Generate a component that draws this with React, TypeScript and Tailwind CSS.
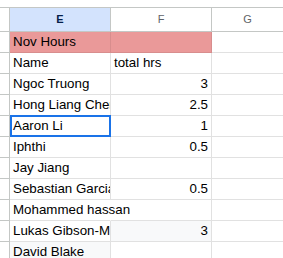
import React from "react";

type Row = {
  name: string;
  hrs?: string;
  overflow?: boolean;
  nameBg?: string;
  hrsBg?: string;
  selected?: boolean;
};

const rows: Row[] = [
  { name: "Name", hrs: "total hrs" },
  { name: "Ngoc Truong", hrs: "3" },
  { name: "Hong Liang Chen", hrs: "2.5" },
  { name: "Aaron Li", hrs: "1", selected: true },
  { name: "Iphthi", hrs: "0.5" },
  { name: "Jay Jiang" },
  { name: "Sebastian Garcia", hrs: "0.5" },
  { name: "Mohammed hassan", overflow: true },
  { name: "Lukas Gibson-Morris", hrs: "3", hrsBg: "bg-[#f8f9fa]" },
  { name: "David Blake", nameBg: "bg-[#f8f9fa]" },
];

export default function App() {
  return (
    <div
      className="w-[283px] h-[258px] overflow-hidden bg-white text-[13.33px] text-black"
      style={{ fontFamily: '"Liberation Sans", Arial, sans-serif' }}
    >
      <div className="h-[7px]" />

      {/* column headers */}
      <div className="flex h-[25px] border-y border-[#c4c7c5] text-[11px]">
        <div className="w-[10px] shrink-0 border-r border-[#c4c7c5]" />
        <div className="w-[101px] shrink-0 border-r border-[#c4c7c5] bg-[#d3e3fd] flex items-center justify-center font-bold text-[#041e49]">
          E
        </div>
        <div className="w-[101px] shrink-0 border-r border-[#c4c7c5] flex items-center justify-center text-[#5f6368]">
          F
        </div>
        <div className="flex-1 flex items-center justify-center text-[#5f6368]">G</div>
      </div>

      {/* title row */}
      <div className="flex h-[21px]">
        <div className="w-[10px] shrink-0 border-r border-b border-[#c4c7c5]" />
        <div className="w-[101px] shrink-0 border-r border-b border-[#d88d8d] bg-[#ea9999] px-[3px] flex items-end pb-[2px] leading-[16px]">
          Nov Hours
        </div>
        <div className="w-[101px] shrink-0 border-r border-b border-[#d88d8d] bg-[#ea9999]" />
        <div className="flex-1 border-b border-[#e1e1e1]" />
      </div>

      {rows.map((r) => (
        <div key={r.name} className="flex h-[21px]">
          <div className="w-[10px] shrink-0 border-r border-b border-[#c4c7c5]" />
          <div
            className={`relative w-[101px] shrink-0 border-b border-[#e1e1e1] ${
              r.overflow ? "border-r border-r-transparent z-10" : "border-r"
            } ${r.nameBg ?? ""}`}
          >
            <div
              className={`h-full px-[3px] flex items-end pb-[2px] leading-[16px] whitespace-nowrap ${
                r.overflow ? "overflow-visible" : "overflow-hidden"
              }`}
            >
              {r.name}
            </div>
            {r.selected && (
              <div className="absolute left-0 top-[-1px] w-[101px] h-[22px] border-2 border-[#1a73e8]" />
            )}
          </div>
          <div
            className={`w-[101px] shrink-0 border-r border-b border-[#e1e1e1] px-[3px] flex items-end justify-end pb-[2px] leading-[16px] whitespace-nowrap ${
              r.hrsBg ?? ""
            } ${r.hrs && isNaN(Number(r.hrs)) ? "justify-start" : ""}`}
          >
            {r.hrs}
          </div>
          <div className="flex-1 border-b border-[#e1e1e1]" />
        </div>
      ))}
    </div>
  );
}
